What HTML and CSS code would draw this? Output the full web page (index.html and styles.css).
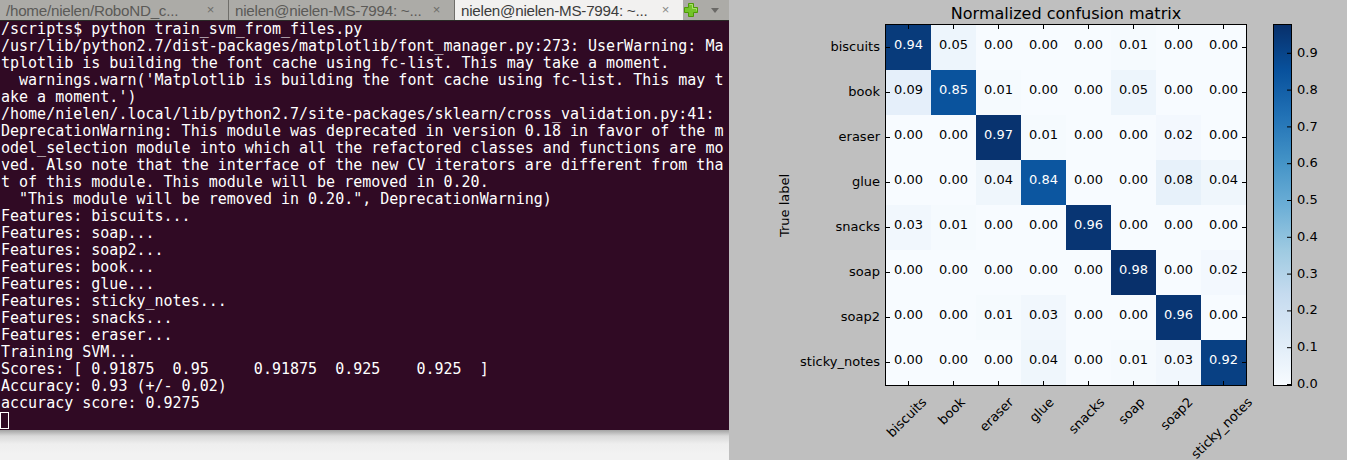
FILE: index.html
```html
<!DOCTYPE html>
<html lang="en">
<head>
<meta charset="utf-8">
<title>Terminal and confusion matrix</title>
<link rel="stylesheet" href="styles.css">
</head>
<body>
<div class="screen">
  <div class="left">
    <section class="terminal">
      <div class="tabbar">
        <div class="tab"><span class="tab-title">/home/nielen/RoboND_c...</span><span class="tab-close">×</span></div>
        <div class="tab"><span class="tab-title">nielen@nielen-MS-7994: ~...</span><span class="tab-close">×</span></div>
        <div class="tab active"><span class="tab-title">nielen@nielen-MS-7994: ~...</span><span class="tab-close">×</span></div>
        <div class="tab-tools">
          <svg class="plus" width="16" height="16" viewBox="0 0 16 16">
            <path d="M5.5 1.5h5v4h4v5h-4v4h-5v-4h-4v-5h4z" fill="#73c42a" stroke="#4e9a06" stroke-width="1"/>
            <path d="M6.5 2.5h3v4h4v2" fill="none" stroke="#a6e36a" stroke-width="1"/>
          </svg>
          <svg class="menu-arrow" width="10" height="8" viewBox="0 0 10 8">
            <path d="M1 2h8l-4 5z" fill="#6a6966"/>
          </svg>
        </div>
      </div>
<pre class="console">/scripts$ python train_svm_from_files.py
/usr/lib/python2.7/dist-packages/matplotlib/font_manager.py:273: UserWarning: Ma
tplotlib is building the font cache using fc-list. This may take a moment.
  warnings.warn('Matplotlib is building the font cache using fc-list. This may t
ake a moment.')
/home/nielen/.local/lib/python2.7/site-packages/sklearn/cross_validation.py:41:
DeprecationWarning: This module was deprecated in version 0.18 in favor of the m
odel_selection module into which all the refactored classes and functions are mo
ved. Also note that the interface of the new CV iterators are different from tha
t of this module. This module will be removed in 0.20.
  "This module will be removed in 0.20.", DeprecationWarning)
Features: biscuits...
Features: soap...
Features: soap2...
Features: book...
Features: glue...
Features: sticky_notes...
Features: snacks...
Features: eraser...
Training SVM...
Scores: [ 0.91875  0.95     0.91875  0.925    0.925  ]
Accuracy: 0.93 (+/- 0.02)
accuracy score: 0.9275
<span class="cursor"></span></pre>
    </section>
    <div class="desk"></div>
  </div>

  <section class="figure">
    <div class="fig-title">Normalized confusion matrix</div>
    <div class="plot-row">
      <div class="ylabel">True label</div>
      <div class="yticks">
        <span>biscuits</span><span>book</span><span>eraser</span><span>glue</span>
        <span>snacks</span><span>soap</span><span>soap2</span><span>sticky_notes</span>
      </div>
      <div class="axes">
        <div class="cell v94 hi">0.94</div><div class="cell v05">0.05</div><div class="cell v00">0.00</div><div class="cell v00">0.00</div><div class="cell v00">0.00</div><div class="cell v01">0.01</div><div class="cell v00">0.00</div><div class="cell v00">0.00</div>
        <div class="cell v09">0.09</div><div class="cell v85 hi">0.85</div><div class="cell v01">0.01</div><div class="cell v00">0.00</div><div class="cell v00">0.00</div><div class="cell v05">0.05</div><div class="cell v00">0.00</div><div class="cell v00">0.00</div>
        <div class="cell v00">0.00</div><div class="cell v00">0.00</div><div class="cell v97 hi">0.97</div><div class="cell v01">0.01</div><div class="cell v00">0.00</div><div class="cell v00">0.00</div><div class="cell v02">0.02</div><div class="cell v00">0.00</div>
        <div class="cell v00">0.00</div><div class="cell v00">0.00</div><div class="cell v04">0.04</div><div class="cell v84 hi">0.84</div><div class="cell v00">0.00</div><div class="cell v00">0.00</div><div class="cell v08">0.08</div><div class="cell v04">0.04</div>
        <div class="cell v03">0.03</div><div class="cell v01">0.01</div><div class="cell v00">0.00</div><div class="cell v00">0.00</div><div class="cell v96 hi">0.96</div><div class="cell v00">0.00</div><div class="cell v00">0.00</div><div class="cell v00">0.00</div>
        <div class="cell v00">0.00</div><div class="cell v00">0.00</div><div class="cell v00">0.00</div><div class="cell v00">0.00</div><div class="cell v00">0.00</div><div class="cell v98 hi">0.98</div><div class="cell v00">0.00</div><div class="cell v02">0.02</div>
        <div class="cell v00">0.00</div><div class="cell v00">0.00</div><div class="cell v01">0.01</div><div class="cell v03">0.03</div><div class="cell v00">0.00</div><div class="cell v00">0.00</div><div class="cell v96 hi">0.96</div><div class="cell v00">0.00</div>
        <div class="cell v00">0.00</div><div class="cell v00">0.00</div><div class="cell v00">0.00</div><div class="cell v04">0.04</div><div class="cell v00">0.00</div><div class="cell v01">0.01</div><div class="cell v03">0.03</div><div class="cell v92 hi">0.92</div>
        <svg class="ticks" width="360" height="360" viewBox="0 0 360 360">
          <g stroke="#000" stroke-width="1">
            <path d="M22.5 0v4M67.5 0v4M112.5 0v4M157.5 0v4M202.5 0v4M247.5 0v4M292.5 0v4M337.5 0v4"/>
            <path d="M22.5 356v4M67.5 356v4M112.5 356v4M157.5 356v4M202.5 356v4M247.5 356v4M292.5 356v4M337.5 356v4"/>
            <path d="M0 22.5h4M0 67.5h4M0 112.5h4M0 157.5h4M0 202.5h4M0 247.5h4M0 292.5h4M0 337.5h4"/>
            <path d="M356 22.5h4M356 67.5h4M356 112.5h4M356 157.5h4M356 202.5h4M356 247.5h4M356 292.5h4M356 337.5h4"/>
          </g>
        </svg>
      </div>
      <div class="colorbar">
        <svg class="cbar-ticks" width="17" height="360" viewBox="0 0 17 360">
          <path d="M13 359.5h4M13 322.7h4M13 285.9h4M13 249.1h4M13 212.3h4M13 175.5h4M13 138.7h4M13 101.9h4M13 65.1h4M13 28.3h4" stroke="#000" stroke-width="1"/>
        </svg>
      </div>
      <div class="cbar-labels">
        <span>0.0</span><span>0.1</span><span>0.2</span><span>0.3</span><span>0.4</span>
        <span>0.5</span><span>0.6</span><span>0.7</span><span>0.8</span><span>0.9</span>
      </div>
    </div>
    <svg class="xticks" width="360" height="74" viewBox="0 0 360 74">
      <g text-anchor="end">
        <text transform="translate(41.2 12) rotate(-45)">biscuits</text>
        <text transform="translate(79.9 12) rotate(-45)">book</text>
        <text transform="translate(128.3 12) rotate(-45)">eraser</text>
        <text transform="translate(168.6 12) rotate(-45)">glue</text>
        <text transform="translate(219.4 12) rotate(-45)">snacks</text>
        <text transform="translate(259.6 12) rotate(-45)">soap</text>
        <text transform="translate(307.5 12) rotate(-45)">soap2</text>
        <text transform="translate(367.1 12) rotate(-45)">sticky_notes</text>
      </g>
    </svg>
  </section>
</div>
</body>
</html>
```

FILE: styles.css
```css
html, body {
  margin: 0;
  padding: 0;
}

body {
  width: 1347px;
  height: 460px;
  overflow: hidden;
  background: #bfbfbf;
}

.screen {
  display: flex;
  width: 1347px;
  height: 460px;
}

/* ---------- terminal side ---------- */
.left {
  width: 729px;
  display: flex;
  flex-direction: column;
}

.terminal {
  height: 430px;
  display: flex;
  flex-direction: column;
  background: #300a24;
}

.tabbar {
  height: 20px;
  border-bottom: 1px solid #2b2a27;
  background: #acaba7;
  display: flex;
  font-family: "Liberation Sans", Arial, sans-serif;
  font-size: 15.2px;
  letter-spacing: -0.25px;
  color: #5b5a57;
}

.tab {
  width: 226px;
  height: 20px;
  display: flex;
  align-items: center;
  padding: 0 14px 0 6px;
  box-sizing: border-box;
  border-right: 1px solid #6f6e6a;
}

.tab:first-child {
  width: 229px;
  padding-left: 6px;
}

.tab.active {
  width: 228px;
  background: #f2f1f0;
  color: #3c3c3c;
  border-right: none;
  padding-left: 6px;
}

.tab-title {
  flex: 1;
  white-space: nowrap;
  line-height: 20px;
  padding-top: 1px;
}

.tab-close {
  flex: none;
  margin-left: 2px;
  font-size: 13px;
  color: #6e6d69;
  line-height: 20px;
}

.tab.active .tab-close {
  color: #8a8a88;
}

.tab-tools {
  flex: 1;
  display: flex;
  align-items: center;
}

.menu-arrow {
  margin-left: 11px;
}

.console {
  margin: 0;
  padding: 0 0 0 1px;
  flex: 1;
  overflow: hidden;
  font-family: "DejaVu Sans Mono", "Liberation Mono", monospace;
  font-size: 15px;
  line-height: 17px;
  color: #ffffff;
  white-space: pre;
}

.cursor {
  display: inline-block;
  width: 9px;
  height: 17px;
  box-sizing: border-box;
  border: 1px solid #ffffff;
  vertical-align: top;
  margin-left: -1px;
}

.desk {
  flex: 1;
  background: linear-gradient(#a3a3a3 0px, #d9d9d9 6px, #eeeeee 14px, #f2f2f2 24px);
}

/* ---------- matplotlib figure ---------- */
.figure {
  flex: 1;
  height: 460px;
  box-sizing: border-box;
  padding: 4px 0 0 48px;
  background: #bfbfbf;
  font-family: "DejaVu Sans", "Liberation Sans", sans-serif;
  color: #000;
}

.fig-title {
  margin-left: 108px;
  width: 362px;
  height: 20px;
  text-align: center;
  font-size: 16px;
  line-height: 19px;
  white-space: nowrap;
}

.plot-row {
  display: flex;
  align-items: flex-start;
  font-size: 13px;
}

.ylabel {
  width: 15px;
  height: 362px;
  writing-mode: vertical-rl;
  transform: rotate(180deg);
  text-align: center;
  line-height: 15px;
  white-space: nowrap;
}

.yticks {
  width: 88px;
  margin-right: 5px;
  padding-top: 1px;
  display: grid;
  grid-template-rows: repeat(8, 45px);
}

.yticks span {
  display: flex;
  align-items: center;
  justify-content: flex-end;
  padding-bottom: 3px;
  line-height: 15px;
  white-space: nowrap;
}

.axes {
  position: relative;
  width: 362px;
  height: 362px;
  box-sizing: border-box;
  border: 1px solid #000;
  display: grid;
  grid-template-columns: repeat(8, 45px);
  grid-template-rows: repeat(8, 45px);
}

.cell {
  display: flex;
  align-items: center;
  justify-content: center;
  box-sizing: border-box;
  padding-bottom: 6px;
  line-height: 15px;
  color: #000;
}

.cell.hi {
  color: #fff;
}

.v00 { background: #f7fbff; }
.v01 { background: #f5fafe; }
.v02 { background: #f3f8fe; }
.v03 { background: #f1f7fd; }
.v04 { background: #eff6fc; }
.v05 { background: #edf5fc; }
.v08 { background: #e7f1fa; }
.v09 { background: #e5effa; }
.v84 { background: #0c56a0; }
.v85 { background: #0a539d; }
.v92 { background: #084083; }
.v94 { background: #083b7b; }
.v96 { background: #083573; }
.v97 { background: #08336f; }
.v98 { background: #08306b; }

.ticks {
  position: absolute;
  left: 0;
  top: 0;
  pointer-events: none;
}

.colorbar {
  position: relative;
  margin-left: 26px;
  width: 19px;
  height: 362px;
  box-sizing: border-box;
  border: 1px solid #000;
  background: linear-gradient(to top,
    #f7fbff 0%, #deebf7 12.5%, #c6dbef 25%, #9ecae1 37.5%, #6baed6 50%,
    #4292c6 62.5%, #2171b5 75%, #08519c 87.5%, #08306b 100%);
}

.cbar-ticks {
  position: absolute;
  left: 0;
  top: 0;
}

.cbar-labels {
  margin-left: 5px;
  margin-top: 21px;
  height: 346px;
  display: flex;
  flex-direction: column-reverse;
  justify-content: space-between;
}

.cbar-labels span {
  line-height: 15px;
}

.xticks {
  display: block;
  margin-left: 109px;
  overflow: visible;
  font-family: "DejaVu Sans", "Liberation Sans", sans-serif;
  font-size: 13px;
  fill: #000;
}
```
